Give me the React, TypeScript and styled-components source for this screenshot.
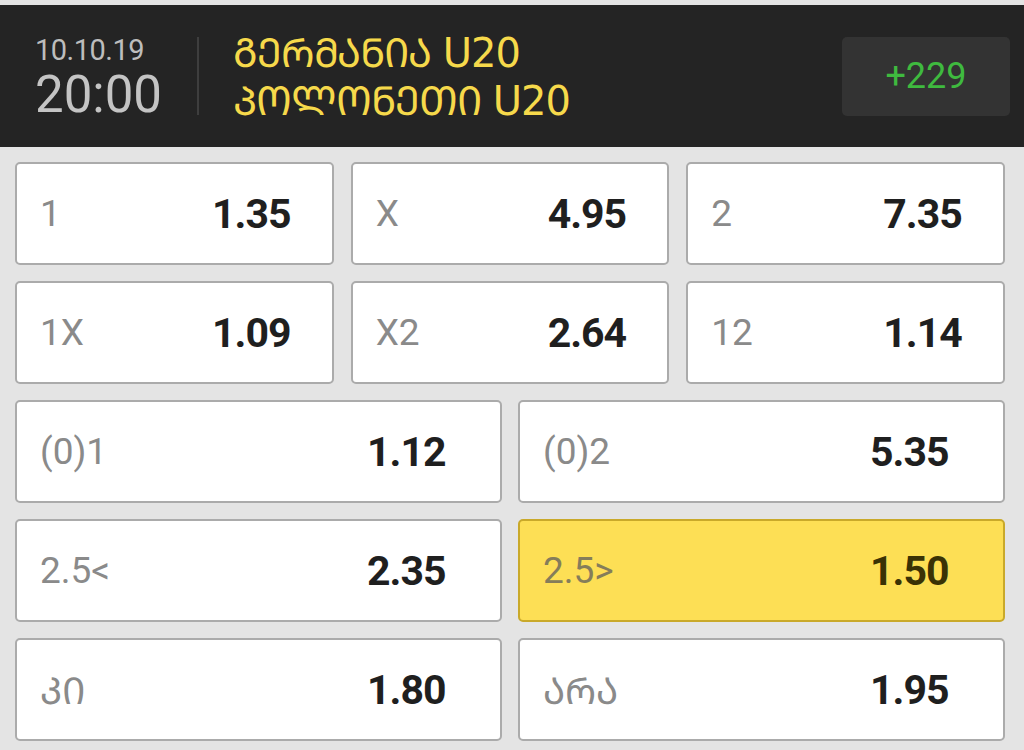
import styled, { createGlobalStyle } from 'styled-components';

const GlobalStyle = createGlobalStyle`
	html, body {
		margin: 0;
		padding: 0;
		background: #e4e4e4;
	}
	body {
		font-family: Roboto, "DejaVu Sans", sans-serif;
	}
`;

const Page = styled.div`
	width: 1024px;
	height: 750px;
	overflow: hidden;
	background: #e4e4e4;
	padding-top: 5px;
	box-sizing: border-box;
`;

const Header = styled.div`
	height: 142px;
	background: #242424;
	display: flex;
	align-items: center;
	padding: 0 14px 0 35px;
	box-sizing: border-box;
`;

const When = styled.div`
	display: flex;
	flex-direction: column;
	color: #bdbdbd;
	width: 130px;
	margin-top: 8px;
`;

const DateText = styled.div`
	font-size: 29px;
	line-height: 30px;
	letter-spacing: -0.5px;
`;

const TimeText = styled.div`
	font-size: 51px;
	line-height: 60px;
	color: #c4c4c4;
`;

const Divider = styled.div`
	width: 2px;
	height: 78px;
	background: #3e3e3e;
	margin: 0 34px 0 32px;
`;

const Teams = styled.div`
	flex: 1;
	display: flex;
	flex-direction: column;
	color: #f6d94b;
	font-family: "DejaVu Sans", sans-serif;
	font-size: 40px;
	line-height: 48px;
	letter-spacing: -1px;
	margin-top: 2px;
`;

const Counter = styled.div`
	width: 168px;
	height: 79px;
	border-radius: 5px;
	background: #333333;
	color: #3fba3f;
	font-size: 36px;
	display: flex;
	align-items: center;
	justify-content: center;
`;

const Board = styled.div`
	display: flex;
	flex-direction: column;
	gap: 16px;
	padding: 15px 19px 0 15px;
`;

const Row = styled.div<{ $cols: number }>`
	display: grid;
	grid-template-columns: repeat(${(p) => p.$cols}, 1fr);
	gap: ${(p) => (p.$cols === 3 ? 17 : 16)}px;
`;

const Cell = styled.div<{ $active?: boolean }>`
	height: 103px;
	box-sizing: border-box;
	border: 2px solid ${(p) => (p.$active ? '#c9a92a' : '#ababab')};
	border-radius: 5px;
	background: ${(p) => (p.$active ? '#fddf55' : '#ffffff')};
	display: flex;
	align-items: center;
	padding-left: 23px;
`;

const Label = styled.div<{ $width: number; $active?: boolean }>`
	width: ${(p) => p.$width}px;
	color: ${(p) => (p.$active ? '#857d5a' : '#8a8a8a')};
	font-size: 37px;
	font-family: Roboto, "DejaVu Sans", sans-serif;
`;

const Value = styled.div<{ $active?: boolean }>`
	color: ${(p) => (p.$active ? '#3a3205' : '#1f1f1f')};
	font-size: 41px;
	font-weight: 700;
	letter-spacing: -1px;
`;

// the app shows Georgian in capital (Mtavruli) letters
const caps = (s: string) =>
	Array.from(s)
		.map((ch) => {
			const c = ch.charCodeAt(0);
			return c >= 0x10d0 && c <= 0x10fa ? String.fromCharCode(c + 0xbc0) : ch;
		})
		.join('');

interface Odd {
	label: string;
	value: string;
	active?: boolean;
}

const rows: Odd[][] = [
	[
		{ label: '1', value: '1.35' },
		{ label: 'X', value: '4.95' },
		{ label: '2', value: '7.35' },
	],
	[
		{ label: '1X', value: '1.09' },
		{ label: 'X2', value: '2.64' },
		{ label: '12', value: '1.14' },
	],
	[
		{ label: '(0)1', value: '1.12' },
		{ label: '(0)2', value: '5.35' },
	],
	[
		{ label: '2.5<', value: '2.35' },
		{ label: '2.5>', value: '1.50', active: true },
	],
	[
		{ label: 'კი', value: '1.80' },
		{ label: 'არა', value: '1.95' },
	],
];

function App() {
	return (
		<Page>
			<GlobalStyle />
			<Header>
				<When>
					<DateText>10.10.19</DateText>
					<TimeText>20:00</TimeText>
				</When>
				<Divider />
				<Teams>
					<div>{caps('გერმანია')} U20</div>
					<div>{caps('პოლონეთი')} U20</div>
				</Teams>
				<Counter>+229</Counter>
			</Header>
			<Board>
				{rows.map((row, i) => (
					<Row key={i} $cols={row.length}>
						{row.map((odd) => (
							<Cell key={odd.label} $active={odd.active}>
								<Label
									$width={row.length === 3 ? 172 : 327}
									$active={odd.active}
								>
									{caps(odd.label)}
								</Label>
								<Value $active={odd.active}>{odd.value}</Value>
							</Cell>
						))}
					</Row>
				))}
			</Board>
		</Page>
	);
}

export default App;
